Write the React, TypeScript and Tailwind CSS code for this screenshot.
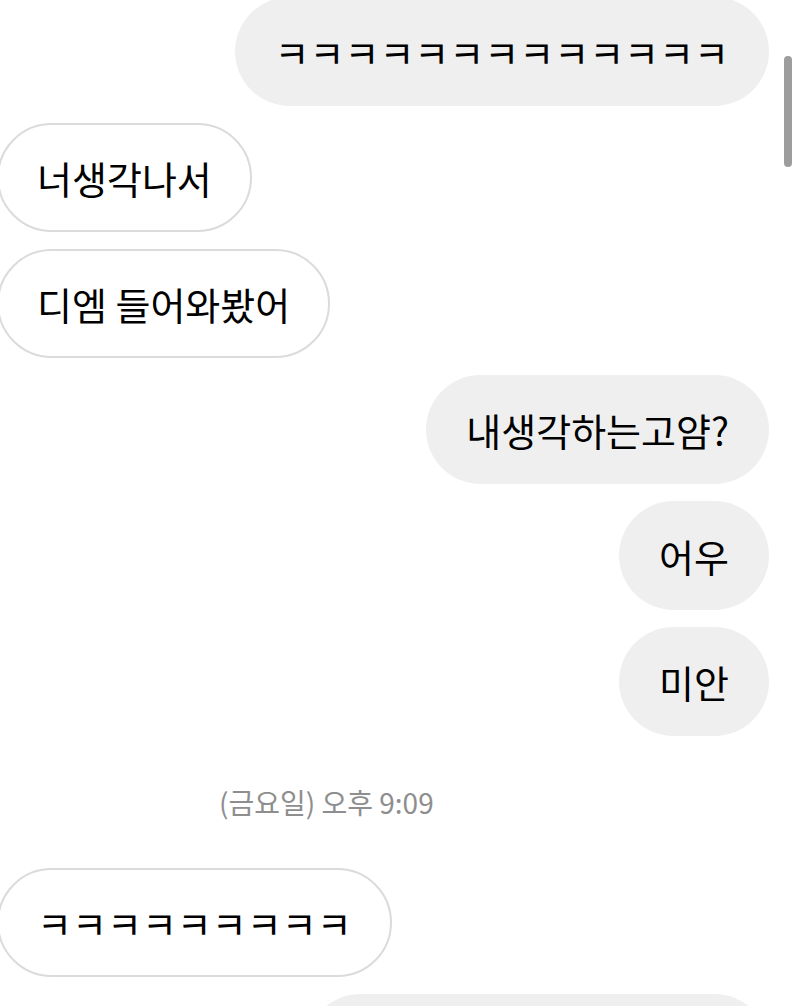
type Msg = { text: string; mine?: boolean };

const before: Msg[] = [
  { text: 'ㅋㅋㅋㅋㅋㅋㅋㅋㅋㅋㅋㅋㅋ', mine: true },
  { text: '너생각나서' },
  { text: '디엠 들어와봤어' },
  { text: '내생각하는고얌?', mine: true },
  { text: '어우', mine: true },
  { text: '미안', mine: true },
];

const after: Msg[] = [
  { text: 'ㅋㅋㅋㅋㅋㅋㅋㅋㅋ' },
  { text: '', mine: true },
];

export default function App() {
  return (
    <div
      className="relative h-[1006px] w-[800px] overflow-hidden bg-white"
      style={{ fontFamily: '"Noto Sans CJK KR", "Noto Sans", sans-serif' }}
    >
      <div className="mt-[-3px] flex flex-col gap-[17px]">
        {before.map((m, i) => (
          <Bubble key={i} msg={m} />
        ))}

        {/* time divider */}
        <div className="flex h-[98px] items-center pl-[219px] text-[28px] text-[#8e8e8e]">
          (금요일) 오후 9:09
        </div>

        {after.map((m, i) => (
          <Bubble key={i} msg={m} wide={m.mine} />
        ))}
      </div>

      {/* scroll indicator */}
      <div className="absolute left-[784px] top-[56px] h-[111px] w-[8px] rounded-full bg-[#9d9d9d]" />
    </div>
  );
}

function Bubble({ msg, wide }: { msg: Msg; wide?: boolean }) {
  if (msg.mine) {
    return (
      <div className="flex justify-end pr-[31px]">
        <div
          className={`flex h-[109px] items-center whitespace-nowrap rounded-full bg-[#efefef] px-[40px] text-[38px] text-black ${
            wide ? 'w-[463px]' : ''
          }`}
        >
          {msg.text}
        </div>
      </div>
    );
  }
  return (
    <div className="flex justify-start">
      <div className="ml-[-3px] flex h-[109px] items-center whitespace-nowrap rounded-full border-2 border-[#dbdbdb] bg-white px-[38px] text-[38px] text-black">
        {msg.text}
      </div>
    </div>
  );
}
